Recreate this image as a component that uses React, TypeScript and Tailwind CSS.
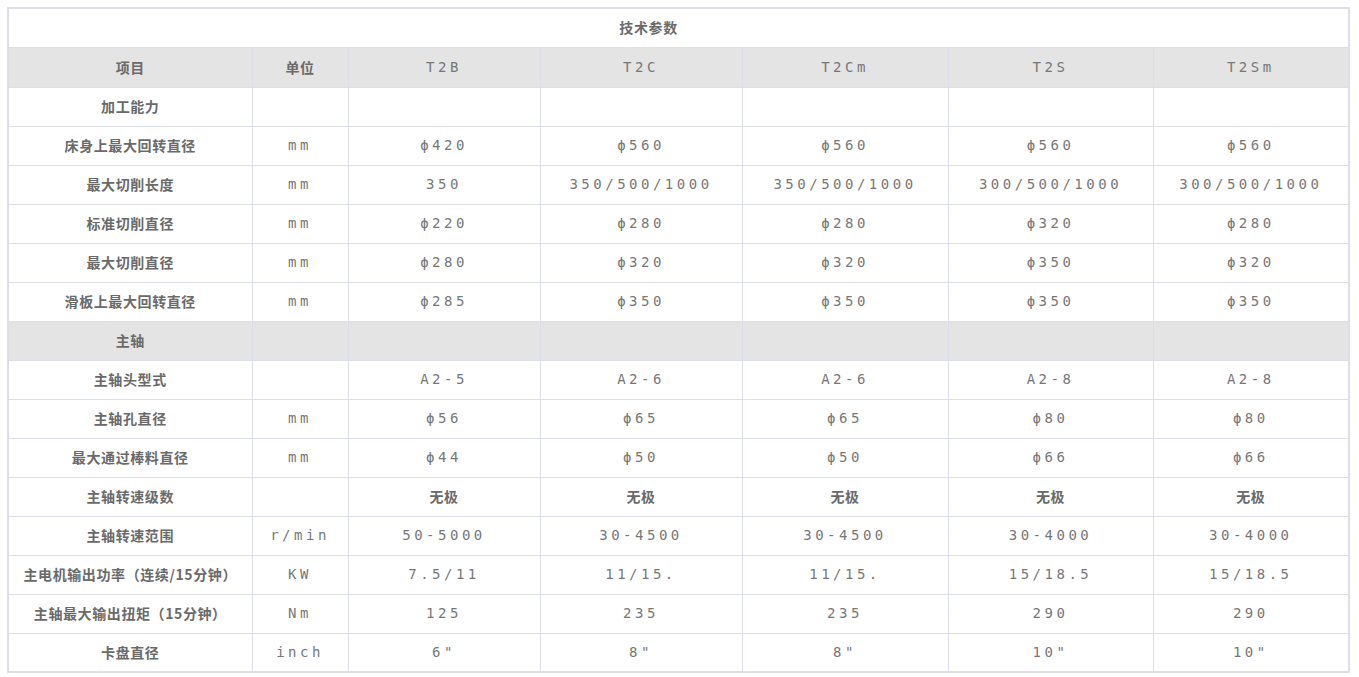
import React, { FC } from "react"

/**
 * technical parameter rows... label, unit, then one value per model
 */
type Row = {
  label: string
  unit?: string
  values?: string[]
  section?: boolean
}

const models: string[] = ["T2B", "T2C", "T2Cm", "T2S", "T2Sm"]

const rows: Row[] = [
  { label: "加工能力" },
  { label: "床身上最大回转直径", unit: "mm", values: ["ϕ420", "ϕ560", "ϕ560", "ϕ560", "ϕ560"] },
  { label: "最大切削长度", unit: "mm", values: ["350", "350/500/1000", "350/500/1000", "300/500/1000", "300/500/1000"] },
  { label: "标准切削直径", unit: "mm", values: ["ϕ220", "ϕ280", "ϕ280", "ϕ320", "ϕ280"] },
  { label: "最大切削直径", unit: "mm", values: ["ϕ280", "ϕ320", "ϕ320", "ϕ350", "ϕ320"] },
  { label: "滑板上最大回转直径", unit: "mm", values: ["ϕ285", "ϕ350", "ϕ350", "ϕ350", "ϕ350"] },
  { label: "主轴", section: true },
  { label: "主轴头型式", values: ["A2-5", "A2-6", "A2-6", "A2-8", "A2-8"] },
  { label: "主轴孔直径", unit: "mm", values: ["ϕ56", "ϕ65", "ϕ65", "ϕ80", "ϕ80"] },
  { label: "最大通过棒料直径", unit: "mm", values: ["ϕ44", "ϕ50", "ϕ50", "ϕ66", "ϕ66"] },
  { label: "主轴转速级数", values: ["无极", "无极", "无极", "无极", "无极"] },
  { label: "主轴转速范围", unit: "r/min", values: ["50-5000", "30-4500", "30-4500", "30-4000", "30-4000"] },
  { label: "主电机输出功率（连续/15分钟）", unit: "KW", values: ["7.5/11", "11/15.", "11/15.", "15/18.5", "15/18.5"] },
  { label: "主轴最大输出扭矩（15分钟）", unit: "Nm", values: ["125", "235", "235", "290", "290"] },
  { label: "卡盘直径", unit: "inch", values: ['6"', '8"', '8"', '10"', '10"'] },
]

const cjk = "font-['Noto_Sans_CJK_SC','Noto_Sans',sans-serif] font-bold text-[14px] tracking-[0.6px] text-[#6a6a6a]"
const mono = "font-['DejaVu_Sans_Mono','Noto_Sans_CJK_SC',monospace] text-[14px] tracking-[3.5px] text-[#777777]"
const cell = "border border-[#dcdfea] text-center align-middle p-0"

// values like 无极 are chinese, the rest use the wide mono look
const isCjk = (v: string) => /[\u4e00-\u9fff]/.test(v)

const App: FC = () => {
  return (
    <div className="w-[1359px] h-[677px] bg-white pt-[7px] pl-[7px]">
      <table className="border-collapse table-fixed w-[1341px] border-2 border-[#dcdfea]">
        <colgroup>
          <col className="w-[244px]" />
          <col className="w-[96px]" />
          <col className="w-[192px]" />
          <col className="w-[202px]" />
          <col className="w-[206px]" />
          <col className="w-[205px]" />
          <col className="w-[196px]" />
        </colgroup>
        <tbody>
          <tr className="h-[39px]">
            <td colSpan={7} className={`${cell} ${cjk} pr-[60px]`}>技术参数</td>
          </tr>
          <tr className="h-[40px] bg-[#e4e4e4]">
            <td className={`${cell} ${cjk}`}>项目</td>
            <td className={`${cell} ${cjk}`}>单位</td>
            {models.map((m) => (
              <td key={m} className={`${cell} ${mono}`}>{m}</td>
            ))}
          </tr>
          {rows.map((row, i) => (
            <tr key={i} className={`h-[39px] ${row.section ? "bg-[#e4e4e4]" : "bg-white"}`}>
              <td className={`${cell} ${cjk}`}>{row.label}</td>
              <td className={`${cell} ${mono}`}>{row.unit ?? ""}</td>
              {[0, 1, 2, 3, 4].map((j) => {
                const v = row.values ? row.values[j] : ""
                return (
                  <td key={j} className={`${cell} ${isCjk(v) ? cjk : mono}`}>{v}</td>
                )
              })}
            </tr>
          ))}
        </tbody>
      </table>
    </div>
  )
}

export default App
